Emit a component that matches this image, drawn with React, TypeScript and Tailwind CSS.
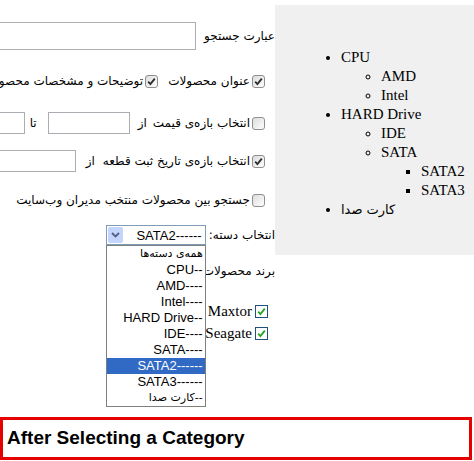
import React from "react";

const fa = "font-['DejaVu_Sans',sans-serif] text-[12px] text-black whitespace-nowrap";

function Box({ on, green }: { on?: boolean; green?: boolean }) {
  return (
    <span
      className={
        green
          ? "w-[13px] h-[13px] shrink-0 border border-[#1c5180] bg-white flex items-center justify-center"
          : "w-[13px] h-[13px] shrink-0 border border-[#8f8f8f] rounded-[3px] bg-gradient-to-br from-[#dcdcdc] to-white flex items-center justify-center"
      }
    >
      {on && (
        <svg width="9" height="9" viewBox="0 0 9 9">
          <path
            d="M1.2 4.6 L3.4 7 L7.8 1.6"
            fill="none"
            stroke={green ? "#22a622" : "#2b2b2b"}
            strokeWidth="1.8"
          />
        </svg>
      )}
    </span>
  );
}

function Field({ w, h = 22 }: { w: string; h?: number }) {
  return (
    <input
      readOnly
      className={`${w} ${h === 28 ? "h-[28px]" : "h-[22px]"} shrink-0 border border-[#abadb3] bg-white outline-none`}
    />
  );
}

// option labels as they show in the rtl select (dashes mark the tree depth)
const options = [
  { t: "همه‌ی دسته‌ها", fa: true },
  { t: "CPU--" },
  { t: "AMD----" },
  { t: "Intel----" },
  { t: "HARD Drive--" },
  { t: "IDE----" },
  { t: "SATA----" },
  { t: "SATA2------", sel: true },
  { t: "SATA3------" },
  { t: "کارت صدا", fa: true, dash: true },
];

function CategorySelect() {
  return (
    <div className="relative w-[100px] shrink-0">
      <div className="h-[20px] border border-[#7f9db9] bg-white flex items-center justify-between pr-[3px] pl-[1px]">
        <span dir="ltr" className="font-['Liberation_Sans',sans-serif] text-[13px] leading-none">
          SATA2------
        </span>
        <span className="w-[15px] h-[16px] bg-[#c4d4fb] rounded-[2px] flex items-center justify-center">
          <svg width="9" height="6" viewBox="0 0 9 6">
            <path d="M1 1 L4.5 4.5 L8 1" fill="none" stroke="#4d6185" strokeWidth="1.8" />
          </svg>
        </span>
      </div>
      <ul className="absolute top-full right-0 w-[100px] border border-[#7f7f7f] bg-white z-10">
        {options.map((o) => (
          <li
            key={o.t}
            dir="ltr"
            className={`h-[16px] leading-[16px] text-right pr-[2px] whitespace-nowrap ${
              o.sel ? "bg-[#316ac5] text-white" : "text-black"
            } ${
              o.fa
                ? "font-['DejaVu_Sans',sans-serif] text-[11px]"
                : "font-['Liberation_Sans',sans-serif] text-[13px]"
            }`}
          >
            {o.dash ? (
              <>
                <bdi>{o.t}</bdi>--
              </>
            ) : (
              o.t
            )}
          </li>
        ))}
      </ul>
    </div>
  );
}

function SearchForm() {
  return (
    <div dir="rtl" className="w-[275px] h-[417px] shrink-0 overflow-hidden flex flex-col pt-[17px]">
      <div className="h-[38px] flex items-center gap-[8px]">
        <span className={fa}>عبارت جستجو</span>
        <Field w="w-[260px]" h={28} />
      </div>

      <div className="h-[52px] flex items-center pr-[10px]">
        <Box on />
        <span className={`${fa} mr-[2px] ml-[10px]`}>عنوان محصولات</span>
        <Box on />
        <span className={`${fa} mr-[2px]`}>توضیحات و مشخصات محصولات</span>
      </div>

      <div className="h-[32px] flex items-center pr-[10px]">
        <Box />
        <span className={`${fa} mr-[2px]`}>انتخاب بازه‌ی قیمت</span>
        <span className={`${fa} mr-[6px] ml-[8px]`}>از</span>
        <Field w="w-[82px]" />
        <span className={`${fa} mr-[11px] ml-[5px]`}>تا</span>
        <Field w="w-[60px]" />
      </div>

      <div className="h-[44px] flex items-center pr-[10px]">
        <Box on />
        <span className={`${fa} mr-[2px]`}>انتخاب بازه‌ی تاریخ ثبت قطعه</span>
        <span className={`${fa} mr-[8px] ml-[10px]`}>از</span>
        <Field w="w-[100px]" />
      </div>

      <div className="h-[34px] flex items-center pr-[10px]">
        <Box />
        <span className={`${fa} mr-[2px]`}>جستجو بین محصولات منتخب مدیران وب‌سایت</span>
      </div>

      <div className="h-[36px] flex items-center gap-[3px]">
        <span className={fa}>انتخاب دسته:</span>
        <CategorySelect />
      </div>

      <div className="h-[36px] flex items-center">
        <span className={fa}>برند محصولات:</span>
      </div>

      <div className="mt-[11px] flex flex-col pr-[7px] font-['Liberation_Serif',serif] text-[15px] text-black">
        <label className="h-[22px] flex items-center gap-[3px]">
          <Box on green />
          <span>Maxtor</span>
        </label>
        <label className="h-[22px] flex items-center gap-[3px]">
          <Box on green />
          <span>Seagate</span>
        </label>
      </div>
    </div>
  );
}

function CategoryTree() {
  return (
    <div className="flex-1 mt-[5px] h-[250px] bg-[#f0f0f0] pl-[26px] pt-[43px] font-['Liberation_Serif',serif] text-[15px] leading-[19px] text-black">
      <ul className="list-disc pl-[40px]">
        <li>
          CPU
          <ul className="list-[circle] pl-[40px]">
            <li>AMD</li>
            <li>Intel</li>
          </ul>
        </li>
        <li>
          HARD Drive
          <ul className="list-[circle] pl-[40px]">
            <li>IDE</li>
            <li>
              SATA
              <ul className="list-[square] pl-[40px]">
                <li>SATA2</li>
                <li>SATA3</li>
              </ul>
            </li>
          </ul>
        </li>
        <li className="font-['DejaVu_Sans',serif] text-[13px]">کارت صدا</li>
      </ul>
    </div>
  );
}

export default function App() {
  return (
    <div className="w-[474px] h-[461px] bg-white overflow-hidden">
      <div className="flex">
        <SearchForm />
        <CategoryTree />
      </div>
      <div className="w-[472px] h-[43px] border-[3px] border-[#e60000] flex items-center pl-[4px]">
        <h3 className="font-['Liberation_Sans',sans-serif] font-bold text-[19px] text-black">
          After Selecting a Category
        </h3>
      </div>
    </div>
  );
}
